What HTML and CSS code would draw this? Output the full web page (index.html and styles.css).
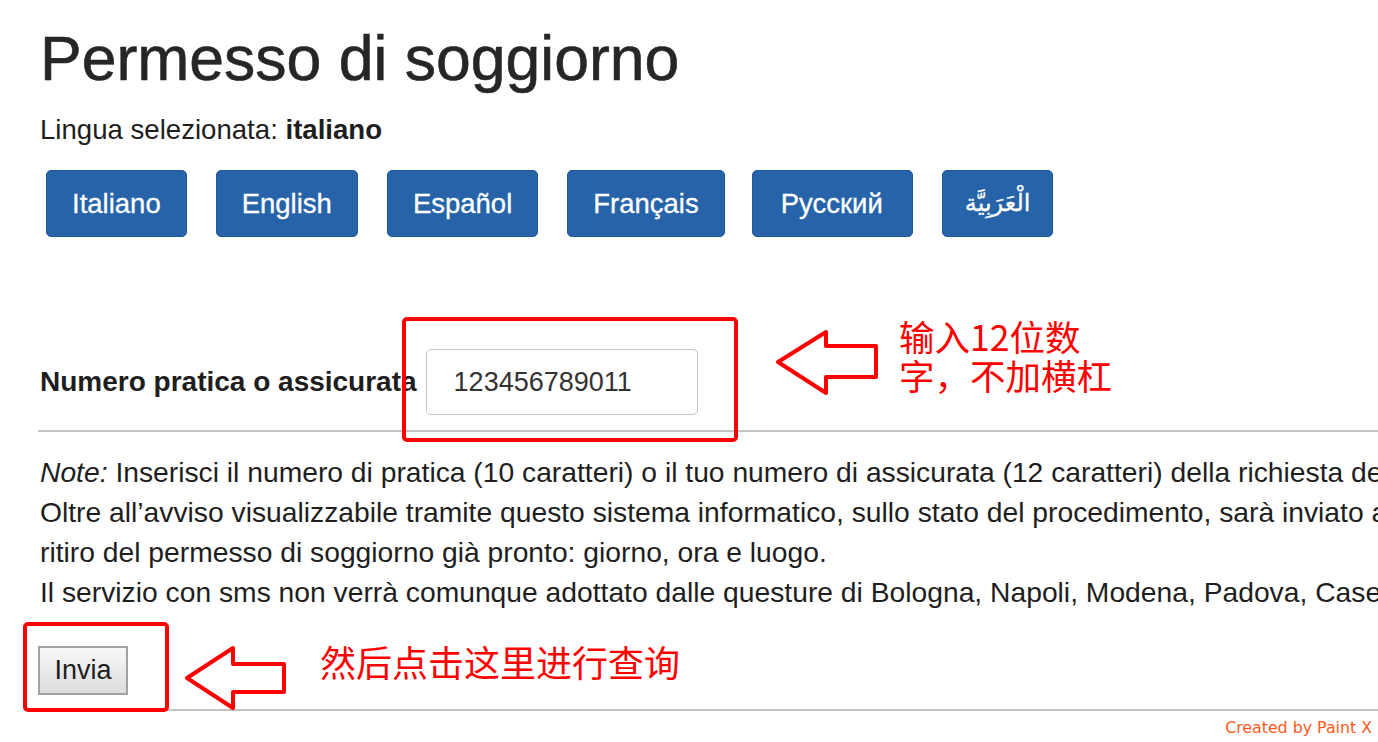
FILE: index.html
```html
<!DOCTYPE html>
<html lang="it">
<head>
<meta charset="utf-8">
<title>Permesso di soggiorno</title>
<link rel="stylesheet" href="styles.css">
</head>
<body>
<div class="page">
  <h1 class="title">Permesso di soggiorno</h1>
  <p class="lang-line">Lingua selezionata: <b>italiano</b></p>
  <div class="lang-buttons">
    <a class="lang-btn">Italiano</a>
    <a class="lang-btn">English</a>
    <a class="lang-btn">Español</a>
    <a class="lang-btn">Français</a>
    <a class="lang-btn lang-ru">Русский</a>
    <a class="lang-btn lang-ar" lang="ar">الْعَرَبِيَّة</a>
  </div>

  <div class="form-row">
    <label class="form-label">Numero pratica o assicurata</label>
    <div class="field" role="textbox">123456789011</div>
  </div>
  <div class="rule"></div>

  <div class="note">
    <div class="note-line"><i>Note:</i> Inserisci il numero di pratica (10 caratteri) o il tuo numero di assicurata (12 caratteri) della richiesta del permesso di soggiorno.</div>
    <div class="note-line">Oltre all’avviso visualizzabile tramite questo sistema informatico, sullo stato del procedimento, sarà inviato al cellulare indicato un sms per il</div>
    <div class="note-line">ritiro del permesso di soggiorno già pronto: giorno, ora e luogo.</div>
    <div class="note-line">Il servizio con sms non verrà comunque adottato dalle questure di Bologna, Napoli, Modena, Padova, Caserta, Venezia e Treviso.</div>
  </div>

  <div class="submit-row">
    <button class="submit-btn" type="button">Invia</button>
  </div>
  <div class="rule rule-bottom"></div>
</div>

<svg class="annot" width="1378" height="742" viewBox="0 0 1378 742" aria-hidden="true">
  <rect x="404" y="319" width="332" height="121" rx="3" fill="none" stroke="#ff0000" stroke-width="4"/>
  <polygon points="778,362 826,332 826,346 876,346 876,377 826,377 826,393" fill="none" stroke="#ff0000" stroke-width="4" stroke-linejoin="round"/>
  <rect x="25" y="624" width="142" height="86" rx="3" fill="none" stroke="#ff0000" stroke-width="4"/>
  <polygon points="187,678 233,648 233,664 284,664 284,692 233,692 233,708" fill="none" stroke="#ff0000" stroke-width="4" stroke-linejoin="round"/>
</svg>
<div class="note-cn note-cn-1">
  <div class="cn-line">输入12位数</div>
  <div class="cn-line">字，不加横杠</div>
</div>
<div class="note-cn note-cn-2">然后点击这里进行查询</div>
<div class="watermark">Created by Paint X</div>
</body>
</html>
```

FILE: styles.css
```css
html, body {
  margin: 0;
  padding: 0;
  background: #ffffff;
}
body {
  width: 1378px;
  height: 742px;
  overflow: hidden;
  position: relative;
  font-family: "Liberation Sans", Arial, "DejaVu Sans", sans-serif;
  font-size: 28px;
  line-height: 40px;
  color: #333333;
}
.page {
  padding: 0 0 0 40px;
  white-space: nowrap;
}
.title {
  margin: 24px 0 0;
  font-size: 62.5px;
  line-height: 68px;
  font-weight: normal;
  color: #262626;
  -webkit-text-stroke: 0.6px #262626;
}
.lang-line {
  margin: 18px 0 0;
  font-size: 27.6px;
  line-height: 40px;
  color: #1e1e1e;
}
.lang-line b {
  font-weight: bold;
}
.lang-buttons {
  display: flex;
  gap: 29px;
  margin: 20px 0 0 6px;
}
.lang-btn {
  display: block;
  box-sizing: border-box;
  height: 67px;
  line-height: 65px;
  padding: 0 25px;
  border: 1px solid #22589a;
  border-radius: 5px;
  background: #2663a9;
  color: #ffffff;
  font-size: 27.5px;
  text-decoration: none;
  -webkit-text-stroke: 0.3px #ffffff;
}
.lang-ru {
  padding: 0 29px 0 28px;
  margin-left: -2px;
}
.lang-ar {
  font-family: "DejaVu Sans", sans-serif;
  font-size: 24px;
  padding: 0 22px;
}
.form-row {
  display: flex;
  align-items: center;
  gap: 9px;
  margin-top: 112px;
}
.form-label {
  font-weight: bold;
  font-size: 28px;
  color: #1e1e1e;
}
.field {
  box-sizing: border-box;
  width: 272px;
  height: 66px;
  line-height: 64px;
  padding: 0 0 0 27px;
  border: 1px solid #c6c6c6;
  border-radius: 5px;
  font-size: 27px;
  color: #333;
  background: #fff;
}
.rule {
  height: 2px;
  background: #c4c4c4;
  margin: 15px 0 0 -2px;
}
.note {
  margin-top: 20px;
  font-size: 28.25px;
  line-height: 40px;
  color: #1e1e1e;
}
.submit-row {
  margin: 34px 0 0 -2px;
}
.submit-btn {
  box-sizing: border-box;
  width: 90px;
  height: 49px;
  padding: 0;
  border: 2px solid #a2a2a2;
  background: linear-gradient(#f8f8f8, #dcdcdc);
  font-family: "Liberation Sans", Arial, sans-serif;
  font-size: 27px;
  color: #1e1e1e;
  border-radius: 0;
}
.rule-bottom {
  margin-top: 14px;
}
.annot {
  position: absolute;
  left: 0;
  top: 0;
  pointer-events: none;
}
.note-cn {
  position: absolute;
  font-family: "Noto Sans CJK SC", "Liberation Sans", sans-serif;
  color: #ff0000;
  font-size: 35.5px;
  line-height: 39px;
  white-space: nowrap;
}
.cn-line {
  height: 39px;
}
.note-cn-1 {
  left: 899px;
  top: 316px;
}
.note-cn-2 {
  left: 320px;
  top: 642px;
  font-size: 36px;
}
.watermark {
  position: absolute;
  right: 6px;
  top: 718px;
  font-family: "DejaVu Sans", Verdana, sans-serif;
  font-size: 15.8px;
  line-height: 20px;
  color: #ff5a22;
}
```
